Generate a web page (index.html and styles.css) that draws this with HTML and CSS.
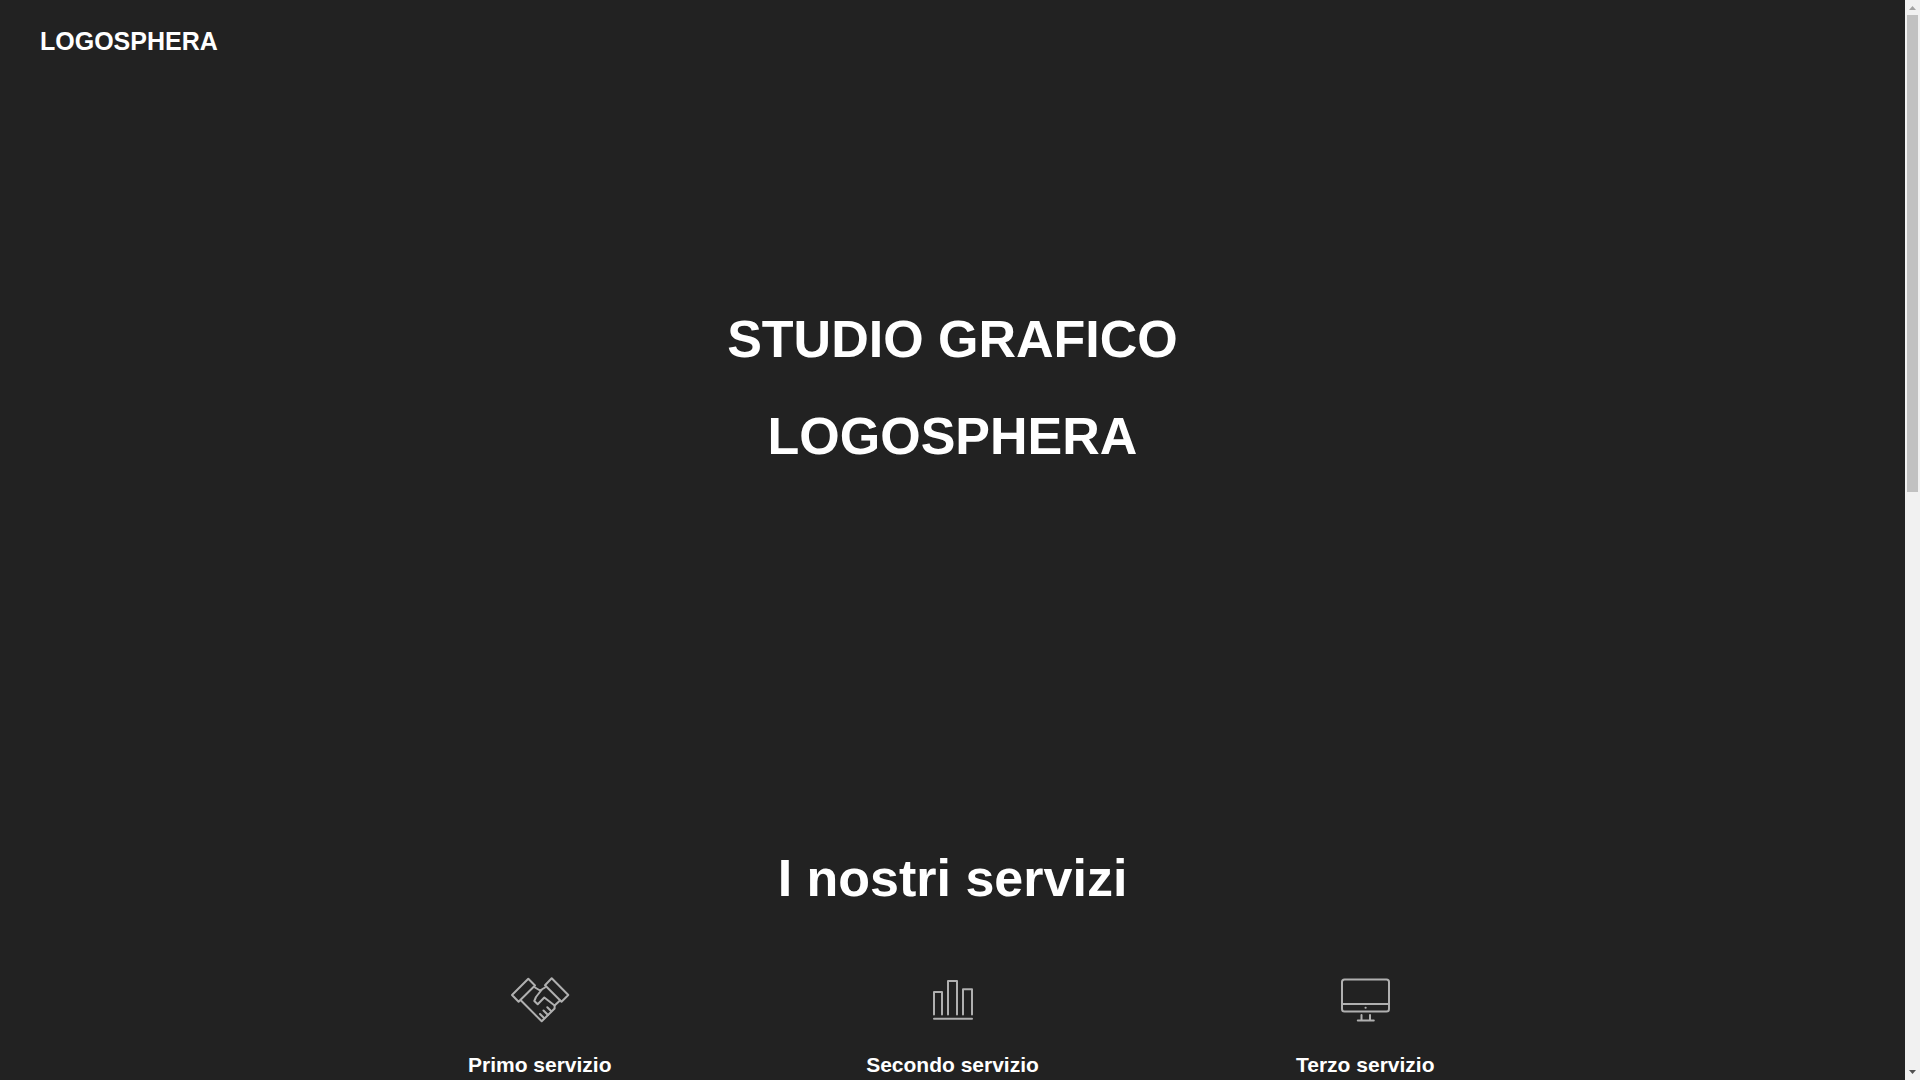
FILE: index.html
```html
<!DOCTYPE html>
<html lang="it">
<head>
    <meta charset="UTF-8">
    <meta name="viewport" content="width=device-width, initial-scale=1.0">
    <title>Logosphera</title>
    <link rel="stylesheet" href="styles.css">
</head>
<body>
    <div class="page">
        <header class="top-bar">
            <a class="logo" href="#home">LOGOSPHERA</a>
        </header>

        <section class="hero" id="home">
            <h1>STUDIO GRAFICO<br>LOGOSPHERA</h1>
        </section>

        <section class="services" id="servizi">
            <h2>I nostri servizi</h2>
            <div class="services-list">
                <div class="service">
                    <svg class="icon" viewBox="0 0 60 60" aria-hidden="true">
                        <path d="M18.3 8.8L25 15.5L8.6 31.7L2 25Z"/>
                        <path d="M41.7 8.3L58.3 25L51.5 31.7L35 15.2Z"/>
                        <path d="M25 17.5L30 20.5L35 17.5"/>
                        <path d="M11 30.5L31.7 51.3L44.6 38.5V35.5L34.3 27.5L27.7 34.3L24.3 31L26 27L31.5 20"/>
                        <path d="M44.6 35.5L50 30.5"/>
                        <path d="M30 44L34.3 48.3M33.5 40.5L38 45M37.3 37.3L41.3 41.3"/>
                    </svg>
                    <h3>Primo servizio</h3>
                </div>
                <div class="service">
                    <svg class="icon" viewBox="0 0 60 60" aria-hidden="true">
                        <path d="M11 44.5V22H19V44.5"/>
                        <path d="M25 44.5V11H34V44.5"/>
                        <path d="M40 44.5V19.3H49V44.5"/>
                        <path d="M11 48.8H49"/>
                    </svg>
                    <h3>Secondo servizio</h3>
                </div>
                <div class="service">
                    <svg class="icon" viewBox="0 0 60 60" aria-hidden="true">
                        <rect x="7" y="9.5" width="47" height="32" rx="2.5"/>
                        <path d="M7 33.9H54"/>
                        <path d="M30.5 37.8H30.7"/>
                        <path d="M26.5 45V50.5M35 45V50.5M22.8 50.5H38.8"/>
                    </svg>
                    <h3>Terzo servizio</h3>
                </div>
            </div>
        </section>
    </div>

    <div class="scrollbar" aria-hidden="true">
        <svg class="arrow up" viewBox="0 0 15 15"><path d="M4 10L7.5 6L11 10Z"/></svg>
        <div class="track">
            <div class="thumb"></div>
        </div>
        <svg class="arrow down" viewBox="0 0 15 15"><path d="M4 5H11L7.5 9Z"/></svg>
    </div>
</body>
</html>
```
FILE: styles.css
```css
* {
    margin: 0;
    padding: 0;
    box-sizing: border-box;
}

body {
    display: flex;
    height: 100vh;
    background: #222;
    color: white;
    font-family: "Liberation Sans", Arial, sans-serif;
}

.page {
    flex: 1;
    overflow-y: auto;
    scrollbar-width: none;
}

/* Scrollbar */
.scrollbar {
    display: flex;
    flex-direction: column;
    width: 15px;
    background: #f1f1f1;
}

.arrow {
    width: 15px;
    height: 15px;
}

.up {
    fill: #a3a3a3;
}

.down {
    fill: #505050;
}

.track {
    flex: 1;
    padding: 0 2px;
}

.thumb {
    height: 45.4%;
    background: #c1c1c1;
}

.top-bar {
    padding: 26px 40px;
}

.logo {
    display: block;
    color: white;
    font-size: 25px;
    font-weight: bold;
    line-height: 30px;
    text-decoration: none;
}

/* Hero */
.hero {
    display: flex;
    justify-content: center;
    padding: 209px 40px 300px;
}

.hero h1 {
    font-size: 52px;
    line-height: 97px;
    text-align: center;
}

/* Services */
.services {
    width: 65%;
    margin: 0 auto;
    padding: 63px 0;
}

.services h2 {
    font-size: 52px;
    line-height: 60px;
    text-align: center;
}

.services-list {
    display: grid;
    grid-template-columns: repeat(3, 1fr);
    padding-top: 62px;
}

.service {
    display: flex;
    flex-direction: column;
    align-items: center;
    gap: 23px;
}

.service h3 {
    font-size: 21px;
    line-height: 24px;
}

.icon {
    width: 60px;
    height: 60px;
    fill: none;
    stroke: #b0b0b0;
    stroke-width: 2;
    stroke-linejoin: round;
    stroke-linecap: round;
}
```
